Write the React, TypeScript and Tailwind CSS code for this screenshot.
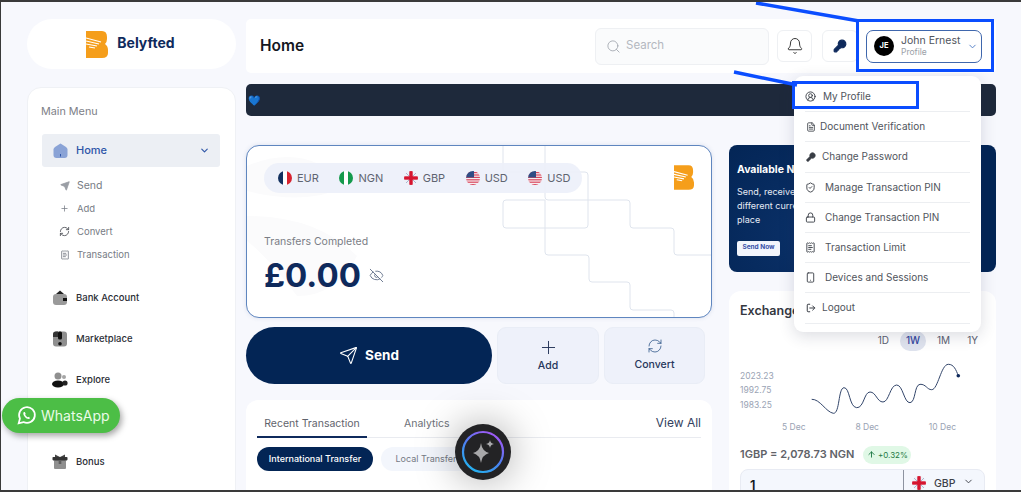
import React from "react";
import { Bell, ChevronDown, Search, Send, Plus, RefreshCw, ReceiptText, CircleUserRound, FileText, KeyRound, ShieldCheck, Lock, Smartphone, LogOut, EyeOff, ArrowUp } from "lucide-react";

const font = { fontFamily: '"Inter","Open Sans",sans-serif' };

function Logo({ w, h }: { w: number; h: number }) {
  return (
    <svg width={w} height={h} viewBox="0 0 22 27">
      <path d="M0 0H16Q21 0 21 6V8Q21 11 19 13Q22 15 22 19V22Q22 27 16 27H0Z" fill="#f59e1b" />
      <path d="M0 7L15 11M0 10L13 13M0 13L11 15M3 16L9 17" stroke="#fff" strokeWidth="1.2" fill="none" />
    </svg>
  );
}

function Flag({ kind }: { kind: "fr" | "ng" | "gb" | "us" }) {
  return (
    <svg width="14" height="14" viewBox="0 0 14 14" className="shrink-0">
      <defs>
        <clipPath id={`c-${kind}`}><circle cx="7" cy="7" r="7" /></clipPath>
      </defs>
      <g clipPath={`url(#c-${kind})`}>
        {kind === "fr" && (<><rect width="5" height="14" fill="#12305f" /><rect x="5" width="4" height="14" fill="#fff" /><rect x="9" width="5" height="14" fill="#d8232f" /></>)}
        {kind === "ng" && (<><rect width="5" height="14" fill="#149a4c" /><rect x="5" width="4" height="14" fill="#fff" /><rect x="9" width="5" height="14" fill="#149a4c" /></>)}
        {kind === "gb" && (<><rect width="14" height="14" fill="#eef1f7" /><path d="M0 0L14 14M14 0L0 14" stroke="#8d9bc0" strokeWidth="0.7" /><rect x="5.3" width="3.4" height="14" fill="#d6152f" /><rect y="5.3" width="14" height="3.4" fill="#d6152f" /></>)}
        {kind === "us" && (<><rect width="14" height="14" fill="#f6eef0" />{[1, 3.4, 5.8, 8.2, 10.6, 13].map((y) => (<rect key={y} y={y} width="14" height="1.2" fill="#d9485f" />))}<rect width="8" height="6.5" fill="#2f4d85" /></>)}
      </g>
    </svg>
  );
}

function Ccy({ kind, label }: { kind: "fr" | "ng" | "gb" | "us"; label: string }) {
  return (
    <span className="flex items-center gap-[5px] text-[11px] text-[#5f6470]">
      <Flag kind={kind} />
      {label}
    </span>
  );
}

function NavIcon({ type }: { type: string }) {
  return (
    <svg width="16" height="16" viewBox="0 0 16 16" className="shrink-0">
      {type === "bank" && (<><path d="M1 7Q1 4 4 4H12Q15 4 15 7V12Q15 15 12 15H4Q1 15 1 12Z" fill="#9a9a9a" /><path d="M4 4L8 0.5L12 4Z" fill="#222" /><rect x="11" y="8" width="4" height="3" fill="#111" /></>)}
      {type === "market" && (<><rect x="1" y="0.5" width="14" height="15" rx="3" fill="#8f8f8f" /><rect x="6" y="0.5" width="4" height="8" rx="1.5" fill="#111" /><rect x="6.2" y="11" width="3.6" height="3.6" rx="1.8" fill="#111" /><path d="M1 3.5Q1 .5 4 .5H6V6H1Z" fill="#333" /></>)}
      {type === "explore" && (<><circle cx="6" cy="4" r="3.5" fill="#8f8f8f" /><circle cx="12" cy="5" r="2" fill="#a5a5a5" /><ellipse cx="6" cy="12" rx="6" ry="3.5" fill="#111" /><ellipse cx="13" cy="11" rx="2.6" ry="2.6" fill="#222" /></>)}
      {type === "bonus" && (<><rect x="2" y="6" width="12" height="9" rx="1" fill="#8f8f8f" /><rect x="0.5" y="3" width="15" height="3.4" rx="0.8" fill="#333" /><path d="M3 0.5L8 3L13 0.5V3H3Z" fill="#444" /><rect x="6.7" y="6" width="2.6" height="4" fill="#5e5e5e" /></>)}
    </svg>
  );
}

function SubItem({ icon, label, size = "text-[9.5px]" }: { icon: React.ReactNode; label: string; size?: string }) {
  return (
    <div className={`flex h-[23px] items-center gap-[6px] pl-[17px] text-[#777c85] ${size}`}>
      <span className="flex w-[13px] justify-center">{icon}</span>
      {label}
    </div>
  );
}

function NavItem({ type, label, className = "" }: { type: string; label: string; className?: string }) {
  return (
    <div className={`flex h-[20px] items-center gap-[8px] pl-[11px] text-[9.5px] font-medium text-[#2b2e35] ${className}`}>
      <NavIcon type={type} />
      {label}
    </div>
  );
}

function MenuRow({ icon, label, gap = "gap-[9px]" }: { icon: React.ReactNode; label: string; gap?: string }) {
  return (
    <div className={`flex h-[30.2px] items-center ${gap} border-b border-[#eceef1] text-[10px] text-[#50545c]`}>
      <span className="flex w-[11px] justify-center text-[#3a3e46]">{icon}</span>
      {label}
    </div>
  );
}

export default function App() {
  return (
    <div style={font} className="relative h-[492px] w-[1021px] overflow-hidden border-t-2 border-b-2 border-l border-[#3a3a3a] bg-[#f7f8fd]">
      <div className="flex gap-[10px] pl-[26px] pt-[17px]">
        {/* sidebar */}
        <div className="w-[209px] shrink-0">
          <div className="flex h-[50px] items-center justify-center gap-[9px] rounded-full bg-white pr-[2px]">
            <Logo w={22} h={27} />
            <span className="pb-[3px] text-[14px] font-bold text-[#0f2a5c]">Belyfted</span>
          </div>
          <div className="mt-[18px] h-[420px] rounded-t-[14px] border border-[#eff1f5] bg-white px-[13px]">
            <div className="pt-[16px] text-[10.8px] text-[#7d8087]">Main Menu</div>
            <div className="ml-[1px] mr-[2px] mt-[14px] flex h-[33px] items-center gap-[8px] rounded-[3px] bg-[#eceff4] pl-[11px] pr-[10px] text-[11px] font-medium text-[#2f56a8]">
              <svg width="15" height="15" viewBox="0 0 15 15"><path d="M0.5 6.5Q0.5 5 2 4L7.5 0.5L13 4Q14.5 5 14.5 6.5V12Q14.5 15 11.5 15H3.5Q0.5 15 0.5 12Z" fill="#8aa3d6" /><rect x="7" y="11" width="1" height="2.5" fill="#2f56a8" /></svg>
              <span className="flex-1">Home</span>
              <ChevronDown size={11} strokeWidth={2.5} />
            </div>
            <div className="mt-[7px]">
              <SubItem size="text-[10.5px]" icon={<Send size={10} fill="#9a9ea5" className="text-[#9a9ea5]" />} label="Send" />
              <SubItem icon={<Plus size={9} />} label="Add" />
              <SubItem icon={<RefreshCw size={11} className="text-[#55585e]" />} label="Convert" />
              <SubItem icon={<ReceiptText size={10} />} label="Transaction" />
            </div>
            <NavItem className="mt-[22px]" type="bank" label="Bank Account" />
            <NavItem className="mt-[21px]" type="market" label="Marketplace" />
            <NavItem className="mt-[21px]" type="explore" label="Explore" />
            <NavItem className="mt-[62px]" type="bonus" label="Bonus" />
          </div>
        </div>

        {/* main */}
        <div className="w-[750px] shrink-0">
          <div className="flex h-[54px] items-center rounded-[5px] bg-white pl-[14px]">
            <span className="flex-1 text-[15.5px] font-semibold text-[#14171f]">Home</span>
            <div className="flex h-[37px] w-[174px] items-center gap-[5px] rounded-[6px] border border-[#eef0f3] bg-[#fafbfc] pl-[10px] text-[11.5px] text-[#b4b8c0]">
              <Search size={15} strokeWidth={1.3} className="text-[#9ca1aa]" />
              Search
            </div>
            <div className="ml-[8px] flex h-[32px] w-[35px] items-center justify-center rounded-[6px] border border-[#eef0f3]">
              <Bell size={18} strokeWidth={1.3} className="text-[#333]" />
            </div>
            <div className="ml-[10px] flex h-[32px] w-[36px] items-center justify-center rounded-[6px] border border-[#eef0f3]">
              <KeyRound size={14} fill="#0f2a5c" className="text-[#0f2a5c]" />
            </div>
            <div className="ml-[8px] flex h-[33px] w-[116px] items-center rounded-[7px] border border-[#3f67ad] pl-[7px]">
              <span className="flex h-[20px] w-[20px] items-center justify-center rounded-full bg-black text-[7.5px] font-bold text-white">JE</span>
              <span className="ml-[7px] flex-1 leading-none">
                <span className="block text-[10.5px] text-[#4f535c]">John Ernest</span>
                <span className="mt-[2px] block text-[8.5px] text-[#9b9fa7]">Profile</span>
              </span>
              <ChevronDown size={11} className="mr-[3px] text-[#4c79c4]" />
            </div>
            <div className="w-[14px]" />
          </div>

          <div className="mt-[11px] flex h-[32px] items-center rounded-[5px] bg-[#1e293b] pl-[2px] text-[10px] text-[#1673d6]">💙</div>

          <div className="mt-[29px] flex">
            <div className="w-[466px] shrink-0">
              <div className="relative h-[173px] overflow-hidden rounded-[13px] border border-[#5f86bf] bg-white shadow-[0_0_4px_rgba(60,90,150,0.15)]">
                <svg className="absolute left-0 top-0" width="466" height="174" viewBox="0 0 466 174" fill="none" stroke="#dfe4ed" strokeWidth="1">
                  <path d="M256 -2V23Q256 26 259 26H298" />
                  <path d="M298 -2V51Q298 54 301 54H380Q383 54 383 57V79Q383 82 386 82H424Q427 82 427 85V106Q427 109 430 109H466" />
                  <path d="M298 26H338Q341 26 341 29V79Q341 82 338 82H259Q256 82 256 79V57Q256 54 259 54H298" />
                  <path d="M298 54V82" />
                  <path d="M298 82V106Q298 109 301 109H339Q342 109 342 112V133Q342 136 345 136H380Q383 136 383 139V161Q383 164 386 164H424Q427 164 427 167V174" />
                  <path d="M0 20Q60 -5 100 40Q60 60 0 45Z" fill="#fbfbfc" stroke="none" />
                  <path d="M0 70Q70 70 110 110Q90 150 50 150Q20 110 0 95Z" fill="#fbfbfc" stroke="none" />
                </svg>
                <div className="relative flex h-[30px] w-[318px] translate-x-[17px] translate-y-[17px] items-center gap-[20.5px] rounded-full bg-[#ecf0f9]/90 pl-[14px]">
                  <Ccy kind="fr" label="EUR" />
                  <Ccy kind="ng" label="NGN" />
                  <Ccy kind="gb" label="GBP" />
                  <Ccy kind="us" label="USD" />
                  <Ccy kind="us" label="USD" />
                </div>
                <div className="absolute right-[17px] top-[19px]"><Logo w={20} h={25} /></div>
                <div className="relative mt-[58px] pl-[17px] text-[10.5px] text-[#7a7d85]">Transfers Completed</div>
                <div className="relative mt-[5px] flex items-center gap-[8px] pl-[17px]">
                  <span className="text-[33px] font-bold leading-[40px] text-[#0f2a5c]">£0.00</span>
                  <EyeOff size={15} strokeWidth={1.4} className="mt-[2px] text-[#5b6a85]" />
                </div>
              </div>

              <div className="mt-[9px] flex gap-[5px]">
                <div className="flex h-[57px] w-[246px] items-center justify-center gap-[7px] rounded-full bg-[#032555] text-[13.5px] font-bold text-white">
                  <Send size={19} strokeWidth={1.4} />
                  Send
                </div>
                <div className="flex h-[57px] w-[102px] flex-col items-center justify-center rounded-[9px] border border-[#e9edf6] bg-[#eef1fa] text-[10.5px] font-medium text-[#26365a]">
                  <Plus size={21} strokeWidth={1.1} />
                  <span>Add</span>
                </div>
                <div className="flex h-[57px] w-[101px] flex-col items-center justify-center rounded-[9px] border border-[#e9edf6] bg-[#eef1fa] text-[10.5px] font-medium text-[#26365a]">
                  <RefreshCw size={16} strokeWidth={1.1} className="text-[#1f4a80]" />
                  <span className="mt-[3px]">Convert</span>
                </div>
              </div>

              <div className="mt-[16px] h-[100px] rounded-t-[12px] bg-white px-[11px] pt-[16px]">
                <div className="flex h-[22px] items-start border-b border-[#e9ebf0]">
                  <span className="h-[22px] w-[110px] border-b-2 border-[#0f2a5c] text-center text-[10.5px] text-[#5f636c]">Recent Transaction</span>
                  <span className="ml-[37px] text-[10.5px] text-[#6c7078]">Analytics</span>
                  <span className="ml-auto -mt-[2px] text-[12px] text-[#33415e]">View All</span>
                </div>
                <div className="mt-[9px] flex gap-[8px]">
                  <span className="flex h-[24px] w-[116px] items-center justify-center rounded-full bg-[#032555] text-[9px] font-medium text-white">International Transfer</span>
                  <span className="flex h-[24px] w-[90px] items-center justify-center rounded-full bg-[#f3f6fc] text-[9px] text-[#757a84]">Local Transfer</span>
                </div>
              </div>
            </div>

            <div className="ml-[17px] w-[267px] shrink-0">
              <div className="h-[127px] rounded-[8px] bg-[radial-gradient(circle_at_30%_70%,#0b3169,#032555_60%)] px-[8px] pt-[17px] text-white">
                <div className="text-[10.5px] font-bold">Available Now</div>
                <div className="mt-[7px] text-[9px] leading-[14px] text-[#e6ebf5]">Send, receive and hold<br />different currencies in one<br />place</div>
                <div className="mt-[14px] flex h-[15px] w-[43px] items-center justify-center rounded-[2px] bg-[#f2f5fc] text-[6.5px] font-bold text-[#3650a8]">Send Now</div>
              </div>
              <div className="mt-[19px] h-[210px] rounded-t-[12px] bg-white px-[11px] pt-[11px]">
                <div className="text-[12.5px] font-semibold text-[#34373f]">Exchange Rate</div>
                <div className="mt-[10px] flex items-center justify-end pr-[7px] text-[10px] text-[#5a6070]">
                  <span>1D</span>
                  <span className="ml-[11px] flex h-[20px] w-[26px] items-center justify-center rounded-full bg-[#dfe3ee] font-medium text-[#3548a0]">1W</span>
                  <span className="ml-[11px]">1M</span>
                  <span className="ml-[17px]">1Y</span>
                </div>
                <div className="flex h-[70px]">
                  <div className="flex h-[59px] w-[44px] flex-col justify-end gap-[4.5px] text-[8.5px] leading-[10px] text-[#9aa3b4]">
                    <span>2023.23</span><span>1992.75</span><span>1983.25</span>
                  </div>
                  <svg width="190" height="70" viewBox="780 350 190 70" className="-ml-[4px]" fill="none">
                    <path d="M811.700 398.300C820 398 826 411 833.300 412.300C840 413 838 387 844 386.700C850 386.500 849 406 856.700 406.700C864 407 864 391 870 391C876 391 877 401 883 401C889 401 890 384 896.700 384C903 384 904 402 910 401.700C916 401 914 384 920 383.300C926 383 927 388.700 931.700 388.700C938 388.700 941 363.300 948.300 363.300C954 363.300 956 369 958.300 374.700" stroke="#33466b" strokeWidth="1" />
                    <circle cx="958.300" cy="374.700" r="1.800" fill="#0f2a5c" />
                  </svg>
                </div>
                <div className="flex w-[216px] justify-between pl-[42px] text-[8.5px] text-[#9aa3b4]">
                  <span>5 Dec</span><span>8 Dec</span><span>10 Dec</span>
                </div>
                <div className="mt-[12px] flex items-center gap-[9px]">
                  <span className="text-[11px] font-semibold text-[#5f6268]">1GBP = 2,078.73 NGN</span>
                  <span className="flex h-[18px] w-[48px] items-center justify-center gap-[2px] rounded-full bg-[#e0f8e6] text-[8px] text-[#1f7a45]"><ArrowUp size={9} strokeWidth={2.5} />+0.32%</span>
                </div>
                <div className="mt-[5px] flex h-[40px] rounded-[8px] border border-[#e8ebf3] bg-[#f4f7fd]">
                  <span className="w-[163px] border-r border-[#8d93a0] pl-[9px] pt-[6px] text-[13px] font-semibold text-[#14171f]">1</span>
                  <span className="flex items-start gap-[8px] pl-[8px] pt-[6px] text-[10.5px] font-medium text-[#3c4048]"><Flag kind="gb" />GBP<ChevronDown size={11} /></span>
                </div>
              </div>
            </div>
          </div>
        </div>
      </div>

      {/* profile dropdown */}
      <div className="absolute left-[793px] top-[74px] w-[187px] rounded-[9px] bg-white px-[11px] pb-[8px] pt-[6px] shadow-[0_4px_16px_rgba(30,40,70,0.16)]">
        <MenuRow icon={<CircleUserRound size={11} />} label="My Profile" gap="gap-[7px]" />
        <MenuRow icon={<FileText size={10} />} label="Document Verification" gap="gap-[4px]" />
        <MenuRow icon={<KeyRound size={10} fill="#3a3e46" />} label="Change Password" gap="gap-[6px]" />
        <MenuRow icon={<ShieldCheck size={11} />} label="Manage Transaction PIN" />
        <MenuRow icon={<Lock size={11} />} label="Change Transaction PIN" />
        <MenuRow icon={<ReceiptText size={11} />} label="Transaction Limit" />
        <MenuRow icon={<Smartphone size={11} />} label="Devices and Sessions" />
        <MenuRow icon={<LogOut size={10} strokeWidth={2.4} />} label="Logout" gap="gap-[6px]" />
      </div>

      {/* annotations */}
      <svg className="pointer-events-none absolute left-0 top-0" width="1021" height="492">
        <line x1="755" y1="1" x2="858" y2="19" stroke="#0a4dff" strokeWidth="3.500" />
        <line x1="733" y1="70" x2="796" y2="83" stroke="#0a4dff" strokeWidth="3.500" />
      </svg>
      <div className="pointer-events-none absolute left-[855px] top-[17px] h-[53px] w-[138px] border-[3px] border-[#0a4dff]" />
      <div className="pointer-events-none absolute left-[791px] top-[79px] h-[28px] w-[127px] border-[3px] border-[#0a4dff]" />

      {/* WhatsApp */}
      <div className="absolute left-[1px] top-[396px] flex h-[35px] w-[118px] items-center gap-[4px] rounded-full bg-[#4cbe46] pl-[14px] text-[14px] text-[#eafbe8] shadow-[2px_3px_6px_rgba(0,0,0,0.35)]">
        <svg width="21" height="21" viewBox="0 0 24 24" fill="none" stroke="#fff" strokeWidth="2">
          <path d="M3 21L4.500 15.500A9 9 0 1 1 8.500 19.500Z" />
          <path d="M9 8C8 9 8 11 10 13.500C12 16 14.500 16.500 16 15.500L15 13.500L13.500 14C12.500 13.500 11 12 10.500 11L11 9.800L10 8Z" fill="#fff" stroke="none" />
        </svg>
        WhatsApp
      </div>

      {/* AI button */}
      <div className="absolute left-[454px] top-[422px] flex h-[56px] w-[56px] items-center justify-center rounded-full bg-[#232325] shadow-[0_0_40px_rgba(0,0,0,0.35)]">
        <svg width="44" height="44" viewBox="0 0 44 44">
          <defs>
            <linearGradient id="ring" x1="0.800" y1="0" x2="0.200" y2="1">
              <stop offset="0" stopColor="#a855f7" />
              <stop offset="0.500" stopColor="#4f7df0" />
              <stop offset="1" stopColor="#22b5f0" />
            </linearGradient>
          </defs>
          <circle cx="22" cy="22" r="20" fill="none" stroke="url(#ring)" strokeWidth="2.200" />
          <path d="M20 14Q21 22 28 24Q21 26 20 34Q19 26 12 24Q19 22 20 14Z" transform="translate(0 -1)" fill="#a8a8aa" />
          <path d="M28 11Q28.500 14.500 32 15Q28.500 15.500 28 19Q27.500 15.500 24 15Q27.500 14.500 28 11Z" transform="translate(1 -1)" fill="#a8a8aa" />
        </svg>
      </div>
    </div>
  );
}
